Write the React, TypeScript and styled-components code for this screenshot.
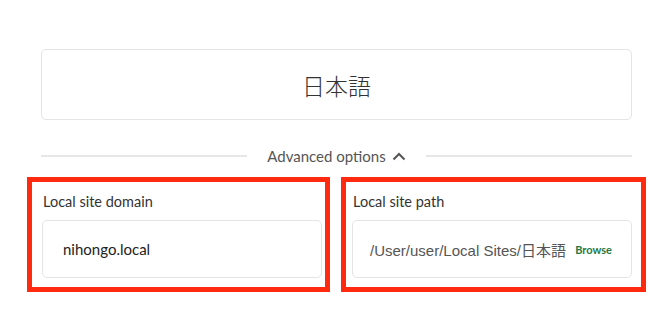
import styled, { createGlobalStyle } from "styled-components";

const GlobalStyle = createGlobalStyle`
  html, body {
    margin: 0;
    padding: 0;
    background: #fff;
  }
  body {
    font-family: Lato, "Noto Sans", sans-serif;
    -webkit-font-smoothing: antialiased;
  }
`;

const Page = styled.div`
  width: 664px;
  height: 318px;
  box-sizing: border-box;
  padding: 49px 32px 0 41px;
  overflow: hidden;
`;

const NameBox = styled.div`
  height: 71px;
  box-sizing: border-box;
  border: 1px solid #e4e4e4;
  border-radius: 5px;
  display: flex;
  align-items: center;
  justify-content: center;
  font-family: "Noto Sans CJK JP", "Noto Sans", sans-serif;
  font-size: 23px;
  font-weight: 300;
  color: #333;
`;

const Divider = styled.div`
  margin-top: 26px;
  height: 20px;
  display: flex;
  align-items: center;
  gap: 20px;
`;

const Rule = styled.div`
  flex: 1;
  height: 2px;
  background: #e6e6e6;
`;

const Toggle = styled.button`
  display: flex;
  align-items: center;
  gap: 6px;
  padding: 0;
  border: 0;
  background: none;
  font-family: Lato, sans-serif;
  font-size: 15px;
  color: #555;
  cursor: pointer;
`;

const Fields = styled.div`
  margin-top: 26px;
  margin-left: 1px;
  display: grid;
  grid-template-columns: 280px 280px;
  column-gap: 30px;
`;

const Field = styled.div`
  position: relative;
`;

const Highlight = styled.div<{ $l: number; $r: number }>`
  position: absolute;
  top: -15px;
  bottom: -14px;
  left: ${({ $l }) => -$l}px;
  right: ${({ $r }) => -$r}px;
  border: 5px solid #ff2a0f;
  pointer-events: none;
`;

const Label = styled.div`
  height: 20px;
  line-height: 20px;
  font-size: 14.5px;
  color: #333;
  padding-left: 1px;
  margin-bottom: 8px;
`;

const Input = styled.div<{ $pad: number }>`
  height: 58px;
  box-sizing: border-box;
  border: 1px solid #e4e4e4;
  border-radius: 5px;
  display: flex;
  align-items: center;
  justify-content: space-between;
  padding: 0 19px 0 ${({ $pad }) => $pad}px;
`;

const Value = styled.span`
  font-size: 15px;
  color: #222;
`;

const PathValue = styled.span`
  font-family: "Liberation Sans", "Noto Sans CJK JP", sans-serif;
  font-size: 15px;
  color: #555;
  white-space: nowrap;
`;

const Browse = styled.span`
  font-size: 11px;
  font-weight: 700;
  color: #1f7a45;
`;

const Chevron = () => (
  <svg width="14" height="9" viewBox="0 0 14 9">
    <path
      d="M1.5 7.5 L7 2 L12.5 7.5"
      fill="none"
      stroke="#555"
      strokeWidth="2"
    />
  </svg>
);

export default function App() {
  return (
    <>
      <GlobalStyle />
      <Page>
        <NameBox>日本語</NameBox>
        <Divider>
          <Rule />
          <Toggle>
            Advanced options <Chevron />
          </Toggle>
          <Rule />
        </Divider>
        <Fields>
          <Field>
            <Highlight $l={15} $r={8} />
            <Label>Local site domain</Label>
            <Input $pad={20}>
              <Value>nihongo.local</Value>
            </Input>
          </Field>
          <Field>
            <Highlight $l={11} $r={14} />
            <Label>Local site path</Label>
            <Input $pad={17}>
              <PathValue>/User/user/Local Sites/日本語</PathValue>
              <Browse>Browse</Browse>
            </Input>
          </Field>
        </Fields>
      </Page>
    </>
  );
}
